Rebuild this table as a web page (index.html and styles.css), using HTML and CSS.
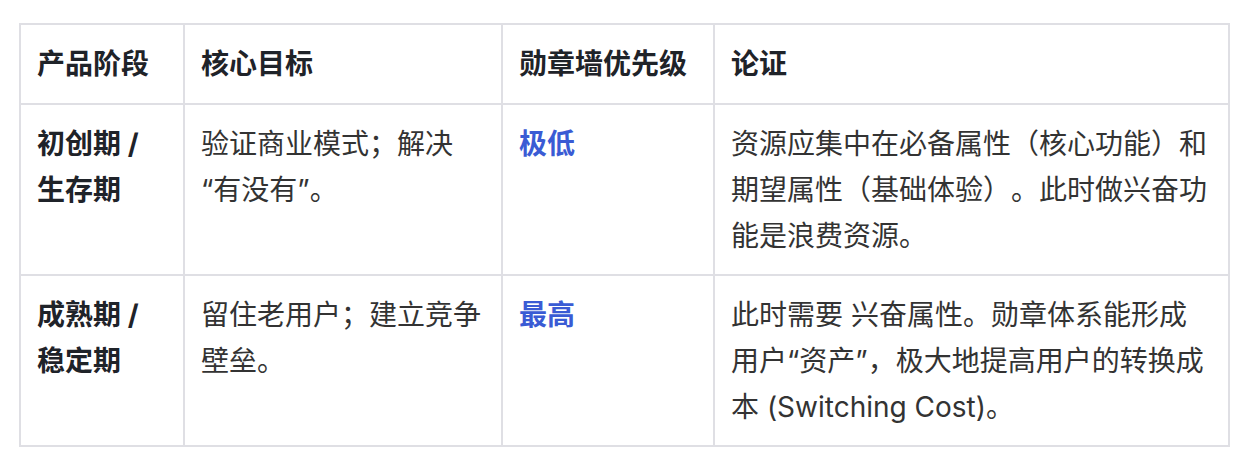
FILE: index.html
```html
<!DOCTYPE html>
<html lang="zh-CN">
<head>
<meta charset="utf-8">
<title>勋章墙优先级</title>
<link rel="stylesheet" href="styles.css">
</head>
<body>
<div class="page">
  <table class="stage-table">
    <colgroup>
      <col class="c1">
      <col class="c2">
      <col class="c3">
      <col class="c4">
    </colgroup>
    <thead>
      <tr>
        <th>产品阶段</th>
        <th>核心目标</th>
        <th>勋章墙优先级</th>
        <th>论证</th>
      </tr>
    </thead>
    <tbody>
      <tr>
        <td class="stage">初创期 / 生存期</td>
        <td>验证商业模式；解决“有没有”。</td>
        <td class="prio">极低</td>
        <td>资源应集中在必备属性（核心功能）和期望属性（基础体验）。此时做兴奋功能是浪费资源。</td>
      </tr>
      <tr>
        <td class="stage">成熟期 / 稳定期</td>
        <td>留住老用户；建立竞争壁垒。</td>
        <td class="prio">最高</td>
        <td>此时需要 兴奋属性。勋章体系能形成用户“资产”，极大地提高用户的转换成本 (Switching Cost)。</td>
      </tr>
    </tbody>
  </table>
</div>
</body>
</html>
```
FILE: styles.css
```css
html, body {
  margin: 0;
  padding: 0;
  background: #ffffff;
}

.page {
  padding: 23px 0 0 19px;
}

.stage-table {
  border-collapse: separate;
  border-spacing: 0;
  table-layout: fixed;
  width: 1211px;
  border-top: 2px solid #dfdfe4;
  border-left: 2px solid #dfdfe4;
  font-family: "Inter", "Noto Sans CJK SC", sans-serif;
  font-size: 28px;
  color: #333333;
  text-spacing-trim: space-all;
}

.c1 { width: 164px; }
.c2 { width: 318px; }
.c3 { width: 212px; }
.c4 { width: 515px; }

.stage-table th,
.stage-table td {
  border-right: 2px solid #dfdfe4;
  border-bottom: 2px solid #dfdfe4;
  text-align: left;
  vertical-align: top;
  line-height: 46px;
}

.stage-table th {
  padding: 16px 16px;
  font-weight: 700;
  color: #1f2329;
}

.stage-table td {
  padding: 16px 16px 15px 16px;
  font-weight: 400;
}

.stage-table td.stage {
  font-weight: 700;
  color: #1f2329;
}

.stage-table td.prio {
  font-weight: 700;
  color: #3a5bd4;
}
```
